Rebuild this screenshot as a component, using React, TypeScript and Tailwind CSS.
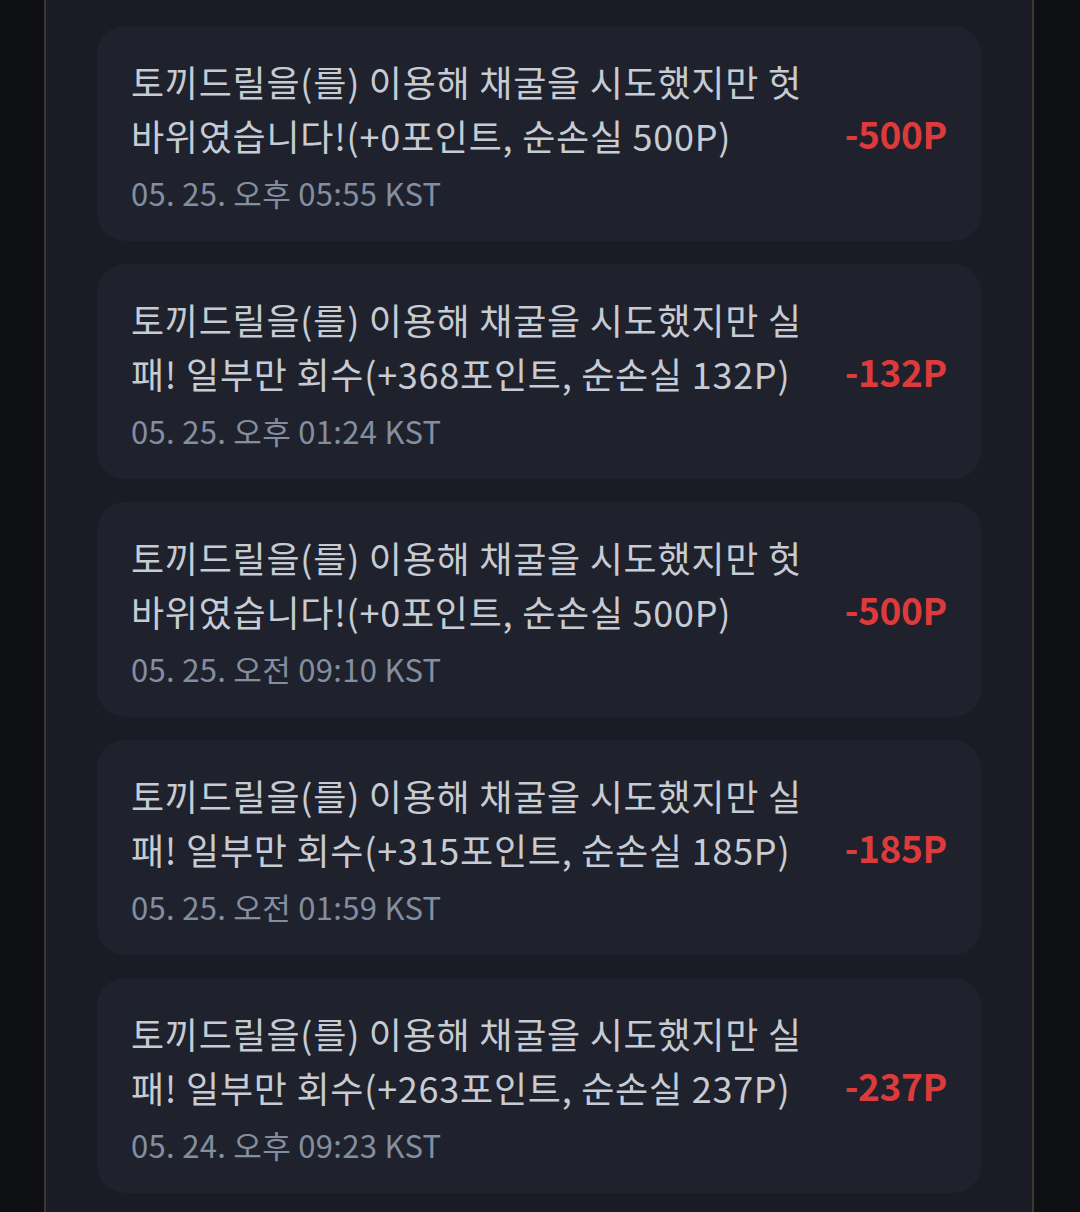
const ITEMS = [
  { text: '토끼드릴을(를) 이용해 채굴을 시도했지만 헛바위였습니다!(+0포인트, 순손실 500P)', amount: '-500P', date: '05. 25. 오후 05:55 KST' },
  { text: '토끼드릴을(를) 이용해 채굴을 시도했지만 실패! 일부만 회수(+368포인트, 순손실 132P)', amount: '-132P', date: '05. 25. 오후 01:24 KST' },
  { text: '토끼드릴을(를) 이용해 채굴을 시도했지만 헛바위였습니다!(+0포인트, 순손실 500P)', amount: '-500P', date: '05. 25. 오전 09:10 KST' },
  { text: '토끼드릴을(를) 이용해 채굴을 시도했지만 실패! 일부만 회수(+315포인트, 순손실 185P)', amount: '-185P', date: '05. 25. 오전 01:59 KST' },
  { text: '토끼드릴을(를) 이용해 채굴을 시도했지만 실패! 일부만 회수(+263포인트, 순손실 237P)', amount: '-237P', date: '05. 24. 오후 09:23 KST' },
];

export default function App() {
  return (
    <div
      className="w-[1080px] h-[1212px] overflow-hidden bg-[#0e0f12] flex justify-center"
      style={{ fontFamily: '"Noto Sans CJK KR", "Noto Sans", sans-serif' }}
    >
      <div className="w-[990px] h-full ml-[-2px] border-x-2 border-[#3f372e] bg-[#191c24] px-[51px] pt-[26px] flex flex-col gap-[23px]">
        {ITEMS.map((it, i) => (
          <div key={i} className="h-[215px] shrink-0 rounded-[28px] bg-[#1f222c] pl-[34px] pr-[34px] pt-[28px] flex items-center justify-between">
            <div className="w-[690px] self-start">
              <div className="text-[36px] leading-[54px] tracking-[0.75px] text-[#c7cbd3] break-all">{it.text}</div>
              <div className="mt-[10px] text-[31px] leading-[42px] tracking-[0.3px] text-[#848ea1]">{it.date}</div>
            </div>
            <div className="text-[37px] font-bold text-[#dd3b3b] mt-[-28px] tracking-[-0.3px]">{it.amount}</div>
          </div>
        ))}
      </div>
    </div>
  );
}
